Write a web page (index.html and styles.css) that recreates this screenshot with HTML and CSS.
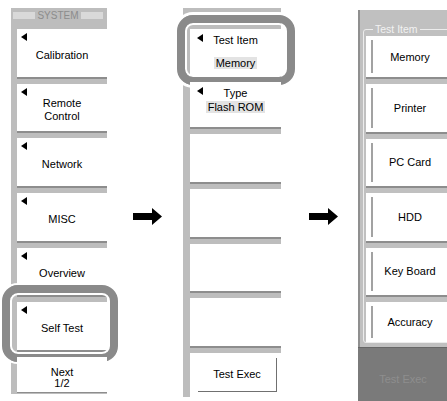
FILE: index.html
```html
<!DOCTYPE html>
<html>
  <head>
    <meta charset="utf-8">
    <title>Self Test</title>
    <link rel="stylesheet" href="styles.css">
  </head>
  <body>
    <div class="screen">
      <div class="menu">
        <div class="menu-title">
          <span class="bar"></span>
          <span class="title-text">SYSTEM</span>
          <span class="bar"></span>
        </div>
        <div class="key"><i class="tri"></i><span class="key-text">Calibration</span></div>
        <div class="key"><i class="tri"></i><span class="key-text">Remote<br>Control</span></div>
        <div class="key"><i class="tri"></i><span class="key-text">Network</span></div>
        <div class="key"><i class="tri"></i><span class="key-text">MISC</span></div>
        <div class="key"><i class="tri"></i><span class="key-text">Overview</span></div>
        <div class="key marked"><i class="tri"></i><span class="key-text">Self Test</span></div>
        <div class="key key-next"><span class="key-text">Next<br>1/2</span></div>
      </div>

      <div class="step-arrow">
        <svg width="29" height="17" viewBox="0 0 29 17"><path d="M0 5H19V0L29 8.5 19 17V12H0Z" fill="#000"/></svg>
      </div>

      <div class="menu menu-test">
        <div class="menu-title"></div>
        <div class="key key-value marked">
          <div class="key-label"><i class="tri"></i><span>Test Item</span></div>
          <span class="value">Memory</span>
        </div>
        <div class="key key-value key-type">
          <div class="key-label"><i class="tri"></i><span>Type</span></div>
          <span class="value">Flash ROM</span>
        </div>
        <div class="key"></div>
        <div class="key"></div>
        <div class="key"></div>
        <div class="key"></div>
        <div class="key key-exec"><span class="exec-btn">Test Exec</span></div>
      </div>

      <div class="step-arrow step-arrow-2">
        <svg width="29" height="17" viewBox="0 0 29 17"><path d="M0 5H19V0L29 8.5 19 17V12H0Z" fill="#000"/></svg>
      </div>

      <div class="dialog">
        <div class="dialog-body">
          <fieldset class="item-group">
            <legend>Test Item</legend>
            <div class="item item-first"><span class="item-mark"></span><span class="item-text">Memory</span></div>
            <div class="item"><span class="item-mark"></span><span class="item-text">Printer</span></div>
            <div class="item"><span class="item-mark"></span><span class="item-text">PC Card</span></div>
            <div class="item"><span class="item-mark"></span><span class="item-text">HDD</span></div>
            <div class="item"><span class="item-mark"></span><span class="item-text">Key Board</span></div>
            <div class="item item-last"><span class="item-mark"></span><span class="item-text">Accuracy</span></div>
          </fieldset>
        </div>
        <div class="dialog-exec">Test Exec</div>
      </div>
    </div>
  </body>
</html>
```

FILE: styles.css
```css
body {
  margin: 0;
  background-color: #ffffff;
  font-family: "Liberation Sans", Arial, sans-serif;
  font-size: 11px;
  color: #000000;
  overflow: hidden;
}

.screen {
  display: flex;
  align-items: flex-start;
  width: 447px;
  height: 401px;
  overflow: hidden;
}

/* soft key menus */
.menu {
  flex: none;
  width: 96px;
  margin: 8px 0 0 11px;
  padding-bottom: 1px;
  background-color: #bdbdbd;
  display: flex;
  flex-direction: column;
}

.menu-test {
  width: 98px;
  margin-left: 0;
  padding-bottom: 0;
}

.menu-title {
  height: 21px;
  box-sizing: border-box;
  padding: 4px 4px 0 2px;
  display: flex;
  align-items: flex-start;
}

.bar {
  flex: 1;
  height: 7px;
  background-color: #d9d9d9;
}

.title-text {
  margin: 0 2px;
  font-size: 10px;
  line-height: 7px;
  color: #8c8c8c;
}

.key {
  position: relative;
  height: 47.67px;
  margin: 0 0 5px 6px;
  border-bottom: 2px solid #8d8d8d;
  background-color: #ffffff;
  display: flex;
  flex-direction: column;
}

.menu-test .key {
  margin-left: 7px;
}

.tri {
  width: 0;
  height: 0;
  border-style: solid;
  border-width: 4px 6px 4px 0;
  border-color: transparent #000000 transparent transparent;
  margin: 4px 0 0 4px;
}

.key-text {
  flex: 1;
  display: flex;
  align-items: center;
  justify-content: center;
  text-align: center;
  line-height: 13px;
  padding-bottom: 7px;
}

.key-next {
  height: 35px;
  margin-bottom: 0;
  border-bottom: 1px solid #8d8d8d;
}

.key-next .key-text {
  align-items: flex-start;
  padding: 10px 0 0;
  line-height: 11.5px;
}

/* highlight ring drawn over the active key */
.marked::after {
  content: "";
  position: absolute;
  left: -15px;
  right: -11px;
  top: -17px;
  bottom: -12px;
  border: 8px solid #8a8a8a;
  border-radius: 16px;
  box-shadow: inset 0 0 0 2px #ffffff, 0 0 0 2px #ffffff;
}

.menu-test .marked::after {
  left: -13px;
  right: -14px;
  top: -14px;
  bottom: -10px;
  box-shadow: inset 0 0 0 2px #ffffff, 0 0 0 3px #ffffff;
}

.key-value {
  padding-top: 5px;
  box-sizing: border-box;
  height: 47.67px;
  align-items: center;
}

.key-label {
  align-self: stretch;
  display: grid;
  grid-template-columns: 1fr auto 1fr;
  align-items: center;
  height: 13px;
  line-height: 13px;
}

.key-label .tri {
  justify-self: start;
  align-self: start;
  margin: 0 0 0 7px;
}

.value {
  margin-top: 10px;
  padding: 0 2px;
  line-height: 12px;
  background-color: #e3e3e3;
}

.key-type {
  padding-top: 5px;
}

.key-type .value {
  margin-top: 1px;
}

.key-exec {
  height: 44px;
  margin-bottom: 0;
  border-bottom: none;
}

.exec-btn {
  height: 33px;
  margin: 5px 4px 0 8px;
  border-right: 1px solid #707070;
  border-bottom: 1px solid #707070;
  display: flex;
  align-items: center;
  justify-content: center;
}

.step-arrow {
  flex: none;
  margin: 208px 21px 0 26px;
}

.step-arrow svg {
  display: block;
}

.step-arrow-2 {
  margin: 208px 20px 0 28px;
}

/* test item dialog */
.dialog {
  flex: none;
  width: 102px;
  height: 391px;
  margin-top: 10px;
  display: flex;
  flex-direction: column;
}

.dialog-body {
  background-color: #c0c0c0;
  border-left: 2px solid #8f8f8f;
  padding: 13px 3px 4px 3px;
}

.item-group {
  margin: 0;
  padding: 1px 2px 0 2px;
  border: 1px solid #ececec;
  border-radius: 3px;
}

.item-group legend {
  margin-left: 7px;
  padding: 0 2px;
  font-size: 10.5px;
  line-height: 12px;
  color: #f2f2f2;
}

.item {
  height: 47.5px;
  margin-bottom: 5px;
  border-bottom: 2px solid #8d8d8d;
  background-color: #ffffff;
  display: flex;
  align-items: stretch;
  padding-left: 5px;
}

.item-first {
  height: 41px;
}

.item-last {
  height: 40px;
  margin-bottom: 0;
  border-bottom: none;
}

.item-mark {
  width: 2px;
  margin: 4px 0;
  background-color: #a2a2a2;
}

.item-text {
  flex: 1;
  margin-right: 7px;
  display: flex;
  align-items: center;
  justify-content: center;
}

.dialog-exec {
  flex: 1;
  border-top: 1px solid #666666;
  background-color: #7a7a7a;
  color: #8e8e8e;
  padding: 25px 12px 0 0;
  line-height: 12px;
  text-align: center;
}
```
